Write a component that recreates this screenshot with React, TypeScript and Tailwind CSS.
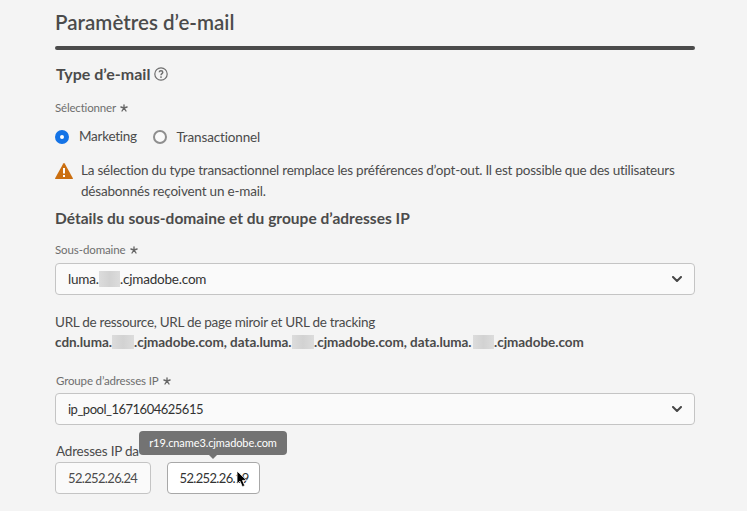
import type { ReactNode } from 'react';

function Star() {
  return (
    <svg className="h-2 w-2 shrink-0" viewBox="0 0 8 8" fill="none" stroke="#666" strokeWidth="1.35" strokeLinecap="round">
      <path d="M4 4V.8M4 4 .9 3M4 4 7.100 3M4 4 2 7M4 4l2 3" />
    </svg>
  );
}

function Label({ children, className }: { children: ReactNode; className: string }) {
  return (
    <div className={`flex h-4 items-center gap-1 text-[11.5px]/4 text-[#6e6e6e] ${className}`}>
      <span>{children}</span>
      <Star />
    </div>
  );
}

function Select({ children, className }: { children: ReactNode; className: string }) {
  return (
    <div className={`flex h-8 items-center justify-between rounded border border-[#c4c4c4] bg-[#fafafa] pr-3 pl-3 text-[#323232] ${className}`}>
      <div className="flex items-center whitespace-pre">{children}</div>
      <svg className="h-1.5 w-2.5" viewBox="0 0 10 6" fill="none" stroke="#464646" strokeWidth="2" strokeLinecap="round" strokeLinejoin="round">
        <path d="M1 1l4 4 4-4" />
      </svg>
    </div>
  );
}

function Redacted({ className }: { className: string }) {
  return <span className={`inline-block shrink-0 bg-linear-to-r from-[#dcdcdc] via-[#d2d2d2] to-[#dcdcdc] ${className}`} />;
}

export default function App() {
  return (
    <main className="h-[511px] w-[747px] overflow-hidden bg-[#f4f4f4] pt-2 pl-[55px] font-['Lato','Noto_Sans',sans-serif] whitespace-nowrap text-[#4b4b4b]">
      <div className="w-[640px]">
        <h1 className="text-[20.5px]/7 font-semibold tracking-[0.03px]">Paramètres d’e-mail</h1>
        <div className="mt-2.5 h-1 rounded-full bg-[#4b4b4b]" />

        <div className="mt-3.5 flex items-center gap-1 pl-px">
          <h2 className="text-base/5 font-bold">Type d’e-mail</h2>
          <svg className="h-3.5 w-3.5" viewBox="0 0 14 14" fill="none" stroke="#6e6e6e" strokeWidth="1.2">
            <circle cx="7" cy="7" r="6.2" />
            <path d="M5.2 5.3C5.3 4.2 6 3.7 7 3.7s1.8.6 1.8 1.6C8.800 6.600 7 6.700 7 8.200" strokeWidth="1.4" />
            <circle cx="7" cy="10.1" r=".9" fill="#6e6e6e" stroke="none" />
          </svg>
        </div>

        <Label className="mt-4 tracking-[-0.18px]">Sélectionner</Label>

        <div className="mt-2.5 flex h-5 text-[13.5px]/5">
          <span className="mt-1 h-3.5 w-3.5 rounded-full border-5 border-[#1473e6] bg-white" />
          <span className="ml-2.5 w-[74px] tracking-[-0.25px]">Marketing</span>
          <span className="mt-1 h-3.5 w-3.5 rounded-full border-2 border-[#8e8e8e] bg-[#fafafa]" />
          <span className="mt-px ml-[9.5px] tracking-[-0.15px]">Transactionnel</span>
        </div>

        <div className="mt-3.5 flex text-[13.5px]/[21px] tracking-[-0.23px]">
          <svg className="mt-[3px] h-4 w-[18px]" viewBox="0 0 18 16">
            <path d="M8.300 .5Q9 -.4 9.700 .5L17.900 15.200Q18 16 17.300 16H.7Q0 16 .1 15.200Z" fill="#cb6f10" />
            <path d="M8 5h2v5.500H8zM8 12h2v2H8z" fill="#fff" />
          </svg>
          <p className="ml-2">
            La sélection du type transactionnel remplace les préférences d’opt-out. Il est possible que des utilisateurs
            <br />
            <span className="tracking-[-0.19px]">désabonnés reçoivent un e-mail.</span>
          </p>
        </div>

        <h2 className="mt-1.5 text-[15.5px]/5 font-bold tracking-[0.02px]">Détails du sous-domaine et du groupe d’adresses IP</h2>

        <Label className="mt-3.5 tracking-[-0.1px]">Sous-domaine</Label>
        <Select className="mt-[5px] text-[13.5px]/5 tracking-[-0.2px]">
          <span className="w-[31px]">luma.</span>
          <Redacted className="h-4 w-[21px]" />
          <span>.cjmadobe.com</span>
        </Select>

        <div className="mt-[17px] text-[13.5px]/5 tracking-[-0.28px]">URL de ressource, URL de page miroir et URL de tracking</div>
        <div className="flex h-5 items-center text-[13.5px]/5 font-bold tracking-[-0.04px]">
          <span className="w-[57px]">cdn.luma.</span>
          <Redacted className="h-3.5 w-[22px]" />
          <span className="w-[158px]">.cjmadobe.com, data.luma.</span>
          <Redacted className="h-3.5 w-[22px]" />
          <span className="w-[159px]">.cjmadobe.com, data.luma.</span>
          <Redacted className="h-3.5 w-[21px]" />
          <span>.cjmadobe.com</span>
        </div>

        <Label className="mt-[21px] pl-px tracking-[-0.15px]">Groupe d’adresses IP</Label>
        <Select className="mt-1 text-[13px]/5 tracking-[-0.5px]">ip_pool_1671604625615</Select>

        <div className="mt-4 pl-px text-[13.5px]/5 tracking-[-0.2px]">Adresses IP da</div>
        <div className="mt-px flex gap-4 text-[13px]/[31px] tracking-[-0.65px]">
          <div className="h-8 w-24 rounded border border-[#c4c4c4] bg-[#fafafa] pl-3">52.252.26.24</div>
          <div className="relative h-8 w-[93px] rounded border border-[#a8a8a8] bg-white pl-[11.5px] text-[#323232]">
            52.252.26.19
            <div className="absolute -top-8 -left-[29px] h-6 w-[148px] rounded bg-[#737373] text-center text-[11px]/6 tracking-[-0.1px] text-white">
              r19.cname3.cjmadobe.com
              <span className="absolute top-6 left-[70px] border-x-4 border-t-4 border-x-transparent border-t-[#737373]" />
            </div>
            <svg className="absolute top-[7px] left-[68px] h-[18px] w-3" viewBox="0 0 12 18">
              <path d="M1 1v13l3-2.800 2.300 5.500 2.500-1-2.300-5.300h4.200z" fill="#000" stroke="#fff" strokeWidth=".8" />
            </svg>
          </div>
        </div>
      </div>
    </main>
  );
}
